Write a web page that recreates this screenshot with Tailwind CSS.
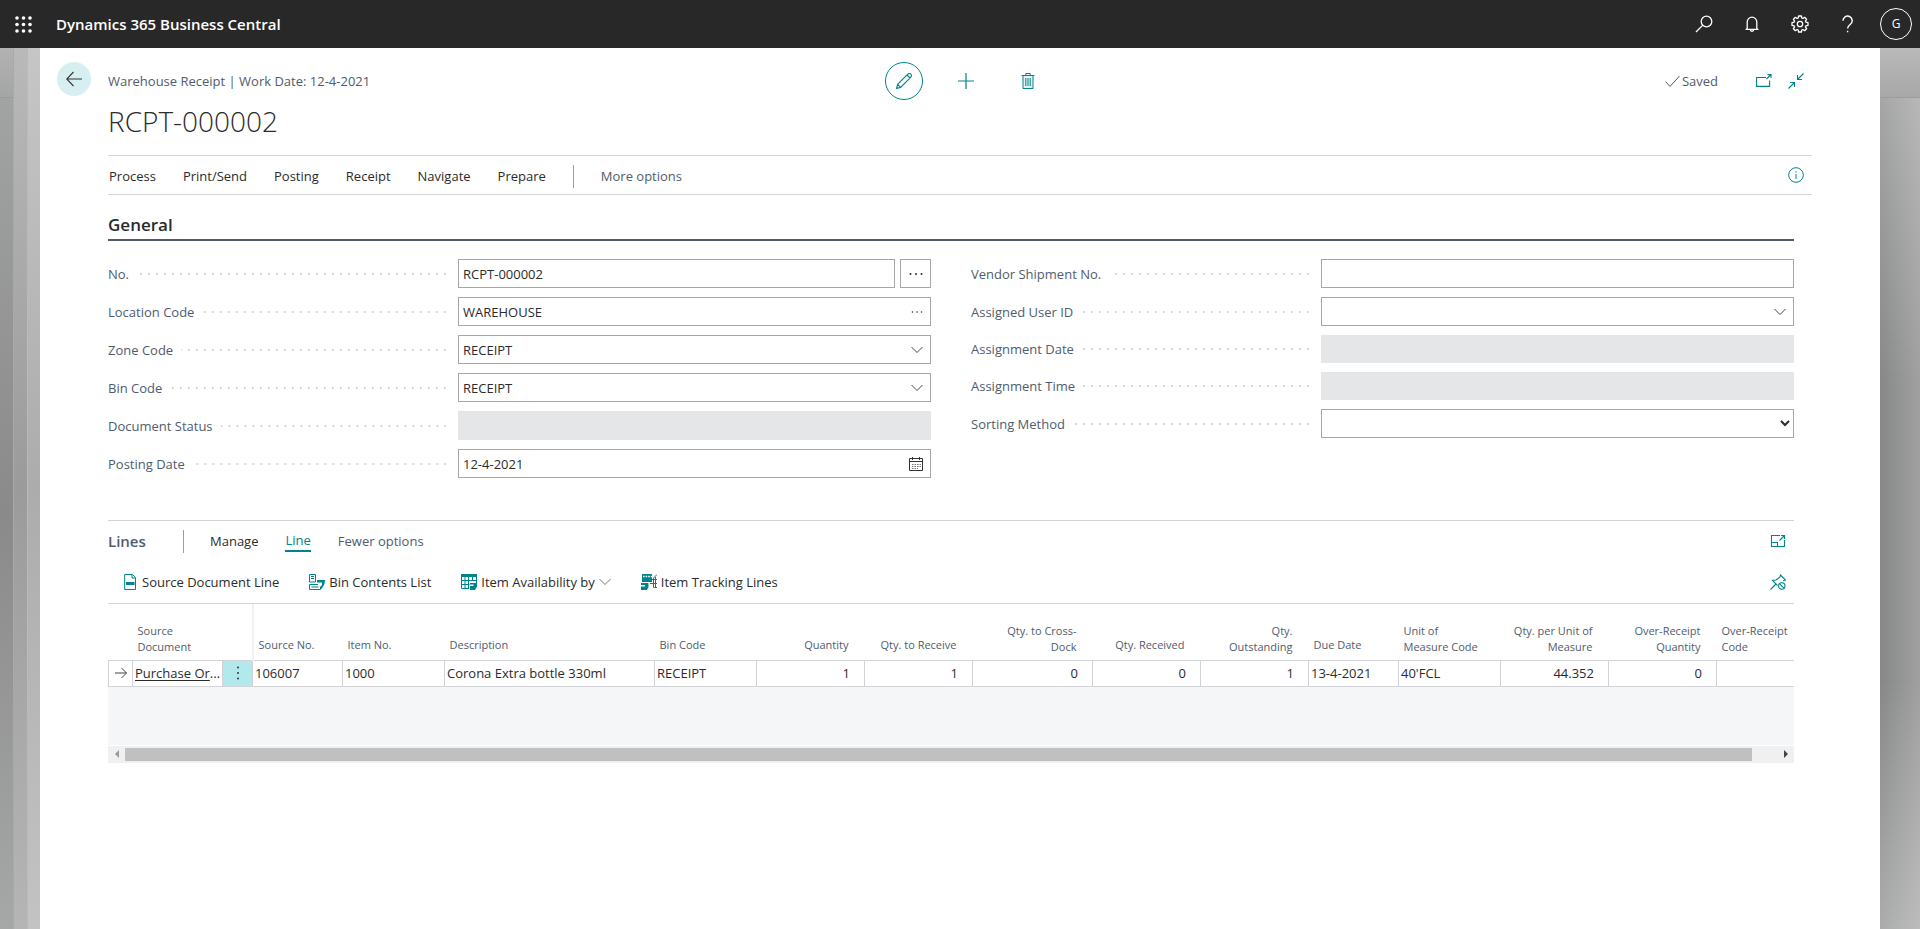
<!DOCTYPE html>
<html lang="en">
<head>
  <meta charset="UTF-8">
  <meta name="viewport" content="width=device-width, initial-scale=1.0">
  <title>Warehouse Receipt - Dynamics 365 Business Central</title>
  <script src="https://cdn.jsdelivr.net/npm/@tailwindcss/browser@4"></script>
</head>
<body class="flex flex-col min-h-screen bg-[#a8a8a8] font-['Open_Sans','Noto_Sans',sans-serif] text-[13px] leading-5 text-[#2b2b2b]">

  <!-- Top bar -->
  <header class="h-12 shrink-0 bg-[#282828] text-white flex items-center justify-between pl-[15px] pr-2">
    <div class="flex items-center gap-6">
      <button type="button" aria-label="App launcher">
        <svg class="w-[17px] h-[17px]" viewBox="0 0 17 17" fill="currentColor">
          <circle cx="2" cy="2" r="1.8"/><circle cx="8.5" cy="2" r="1.8"/><circle cx="15" cy="2" r="1.8"/>
          <circle cx="2" cy="8.5" r="1.8"/><circle cx="8.5" cy="8.5" r="1.8"/><circle cx="15" cy="8.5" r="1.8"/>
          <circle cx="2" cy="15" r="1.8"/><circle cx="8.5" cy="15" r="1.8"/><circle cx="15" cy="15" r="1.8"/>
        </svg>
      </button>
      <a href="#" class="text-[15px] font-semibold">Dynamics 365 Business Central</a>
    </div>
    <div class="flex items-center">
      <button type="button" aria-label="Search" class="w-12 h-12 flex items-center justify-center">
        <svg class="w-[18px] h-[18px]" viewBox="0 0 18 18" fill="none" stroke="currentColor" stroke-width="1.3"><circle cx="11.5" cy="6.5" r="5.3"/><path d="M7.6 10.4 1 17"/></svg>
      </button>
      <button type="button" aria-label="Notifications" class="w-12 h-12 flex items-center justify-center">
        <svg class="w-4 h-4" viewBox="0 0 16 16" fill="none" stroke="currentColor" stroke-width="1.3"><path d="M1.5 13.3h13M3.2 13.3V6a4.8 4.8 0 0 1 9.6 0v7.3M6.3 13.6a1.7 1.7 0 0 0 3.4 0"/></svg>
      </button>
      <button type="button" aria-label="Settings" class="w-12 h-12 flex items-center justify-center">
        <svg class="w-[18px] h-[18px]" viewBox="0 0 18 18" fill="none" stroke="currentColor" stroke-width="1.3" stroke-linejoin="round"><path d="M7.6 1h2.8l.4 2 1.1.5 1.7-1.2 2 2-1.2 1.8.5 1.1 2.1.4v2.8l-2.1.4-.5 1.1 1.2 1.8-2 2-1.7-1.2-1.1.5-.4 2H7.6l-.4-2-1.1-.5-1.7 1.2-2-2 1.2-1.8-.5-1.1L1 10.4V7.6l2.1-.4.5-1.1-1.2-1.8 2-2 1.7 1.2L7.2 3z"/><circle cx="9" cy="9" r="2.7"/></svg>
      </button>
      <button type="button" aria-label="Help" class="w-12 h-12 flex items-center justify-center">
        <svg class="w-[18px] h-[18px]" viewBox="0 0 18 18" fill="none" stroke="currentColor" stroke-width="1.4"><path d="M4 5.8a4.6 4.6 0 1 1 7.4 3.5C9.4 10.8 8.6 11.5 8.6 13.6"/><path d="M8.6 15.8v1.5"/></svg>
      </button>
      <button type="button" aria-label="Account" class="ml-2 w-8 h-8 rounded-full border border-white flex items-center justify-center text-xs">G</button>
    </div>
  </header>

  <div class="flex flex-1">
    <!-- Stacked pages to the left -->
    <div class="flex w-10 shrink-0">
      <div class="w-[13px] flex flex-col">
        <div class="h-[50px] border-b border-[#9a9b9b] bg-linear-to-b from-[#b2b2b2] to-[#a4a5a5]"></div>
        <div class="flex-1 bg-linear-to-b from-[#a2a3a3] via-[#8a8a8a] to-[#a6a7a7]"></div>
      </div>
      <div class="w-[14px] border-l border-[#a8a9a9] bg-linear-to-b from-[#b9b9b9] via-[#9b9b9b] to-[#b5b5b5]"></div>
      <div class="w-[13px] border-l border-[#bababa] bg-linear-to-b from-[#c6c6c6] via-[#acacac] to-[#c3c3c3]"></div>
    </div>

    <main class="flex-1 min-w-0 bg-white pr-[68px]">
      <div class="flex">
        <div class="w-[68px] shrink-0 pt-[14px] pl-[17px]">
          <button type="button" aria-label="Back" class="w-[34px] h-[34px] rounded-full bg-[#d8eff1] flex items-center justify-center">
            <svg class="w-4 h-4" viewBox="0 0 16 16" fill="none" stroke="#333" stroke-width="1.1"><path d="M16 8H.8M7.5 1 .7 8l6.8 7"/></svg>
          </button>
        </div>

        <div class="flex-1 min-w-0">
          <!-- Caption and page commands -->
          <div class="grid grid-cols-[1fr_auto_1fr] items-center pt-[14px]">
            <p class="text-[#505c6d]">Warehouse Receipt | Work Date: 12-4-2021</p>
            <div class="flex items-center gap-6 pl-3 text-[#00838a]">
              <button type="button" aria-label="Edit" class="w-[38px] h-[38px] rounded-full border border-[#00838a] flex items-center justify-center">
                <svg class="w-4 h-4" viewBox="0 0 16 16" fill="none" stroke="currentColor" stroke-width="1.1"><path d="M.6 15.4 1.6 11.4 11.8 1.2a1.9 1.9 0 0 1 3 3L4.6 14.4zM1.6 11.4l3 3M11 2l3 3"/></svg>
              </button>
              <button type="button" aria-label="New" class="w-[38px] h-[38px] flex items-center justify-center">
                <svg class="w-4 h-4" viewBox="0 0 16 16" fill="none" stroke="currentColor" stroke-width="1.2"><path d="M8 0v16M0 8h16"/></svg>
              </button>
              <button type="button" aria-label="Delete" class="w-[38px] h-[38px] flex items-center justify-center">
                <svg class="w-4 h-4" viewBox="0 0 16 16" fill="none" stroke="currentColor"><path fill="#e3f2f3" d="M3 2.5v13h10v-13"/><path d="M1.5 2.5h13M5.8 2.5v-2h4.4v2M5.8 5v8M8 5v8M10.2 5v8"/></svg>
              </button>
            </div>
            <div class="flex items-center justify-end text-[#00838a]">
              <span class="flex items-center gap-0.5 mr-[38px] text-[#505c6d]">
                <svg class="w-[15px] h-[15px]" viewBox="0 0 15 15" fill="none" stroke="currentColor"><path d="m.5 7.5 4.5 5L14.5 2"/></svg>
                Saved
              </span>
              <button type="button" aria-label="Open in new window" class="mr-4">
                <svg class="w-4 h-4" viewBox="0 0 16 16" fill="none" stroke="currentColor" stroke-width="1.1"><path d="M10 4.5H.6v8.9h13V7.5M10.5 6l4-4M11.5 1.6H15V5"/></svg>
              </button>
              <button type="button" aria-label="Collapse page" class="mr-2">
                <svg class="w-4 h-4" viewBox="0 0 16 16" fill="none" stroke="currentColor" stroke-width="1.1"><path d="m.5 15.5 6-6M2 9.5h4.5V14M15.5.5l-6 6M9.5 2v4.5H14"/></svg>
              </button>
            </div>
          </div>
          <h1 class="text-[28px] leading-9 font-light pt-[3px]">RCPT-000002</h1>
        </div>
      </div>

      <div class="pl-[68px]">
        <!-- Action bar -->
        <nav class="mt-4 h-10 border-y border-[#d1d3d8] flex items-center pl-px">
          <div class="flex items-center gap-[27px] pt-0.5">
            <button type="button">Process</button>
            <button type="button">Print/Send</button>
            <button type="button">Posting</button>
            <button type="button">Receipt</button>
            <button type="button">Navigate</button>
            <button type="button">Prepare</button>
            <span class="w-px h-[23px] bg-[#9a9fa8]"></span>
            <button type="button" class="text-[#505c6d]">More options</button>
          </div>
          <button type="button" aria-label="Details" class="ml-auto mr-2 text-[#00838a]">
            <svg class="w-4 h-4" viewBox="0 0 16 16" fill="none" stroke="currentColor"><circle cx="8" cy="8" r="7.3"/><path d="M8 7v5M8 4.2v1.3"/></svg>
          </button>
        </nav>

        <div class="mr-[18px]">
          <!-- General -->
          <section class="pt-4">
            <h2 class="text-[17px] leading-7 font-semibold border-b-2 border-[#505c6d]">General</h2>
            <form class="grid grid-cols-2 gap-x-10 pt-[18px]">
              <div class="flex flex-col gap-[9px]">
                <div class="flex items-center">
                  <label for="no" class="pr-2 text-[#505c6d]">No.</label>
                  <span class="flex-1 h-0.5 mr-3 bg-[linear-gradient(to_left,#d4d6da_2px,transparent_2px)] bg-[length:8px_2px] bg-right bg-repeat-x"></span>
                  <div class="w-[473px] flex gap-[5px]">
                    <input id="no" type="text" value="RCPT-000002" class="flex-1 min-w-0 h-[29px] border border-[#a6a6a6] px-1">
                    <button type="button" aria-label="Assist edit No." class="w-[31px] h-[29px] border border-[#a6a6a6] flex items-center justify-center">
                      <svg class="w-4 h-4" viewBox="0 0 16 16" fill="#333"><circle cx="2.5" cy="8" r="1"/><circle cx="8" cy="8" r="1"/><circle cx="13.5" cy="8" r="1"/></svg>
                    </button>
                  </div>
                </div>
                <div class="flex items-center">
                  <label for="location" class="pr-2 text-[#505c6d]">Location Code</label>
                  <span class="flex-1 h-0.5 mr-3 bg-[linear-gradient(to_left,#d4d6da_2px,transparent_2px)] bg-[length:8px_2px] bg-right bg-repeat-x"></span>
                  <div class="w-[473px] h-[29px] border border-[#a6a6a6] flex items-center">
                    <input id="location" type="text" value="WAREHOUSE" class="flex-1 min-w-0 px-1 outline-none">
                    <button type="button" aria-label="Look up location" class="mr-[7px]">
                      <svg class="w-3 h-3" viewBox="0 0 12 12" fill="#333"><circle cx="1.5" cy="6" r=".8"/><circle cx="6" cy="6" r=".8"/><circle cx="10.5" cy="6" r=".8"/></svg>
                    </button>
                  </div>
                </div>
                <div class="flex items-center">
                  <label for="zone" class="pr-2 text-[#505c6d]">Zone Code</label>
                  <span class="flex-1 h-0.5 mr-3 bg-[linear-gradient(to_left,#d4d6da_2px,transparent_2px)] bg-[length:8px_2px] bg-right bg-repeat-x"></span>
                  <div class="w-[473px] h-[29px] border border-[#a6a6a6] flex items-center">
                    <input id="zone" type="text" value="RECEIPT" class="flex-1 min-w-0 px-1 outline-none">
                    <button type="button" aria-label="Look up zone" class="mr-[7px]">
                      <svg class="w-3 h-3" viewBox="0 0 12 12" fill="none" stroke="#444"><path d="m.5 3 5.5 5.5L11.5 3"/></svg>
                    </button>
                  </div>
                </div>
                <div class="flex items-center">
                  <label for="bin" class="pr-2 text-[#505c6d]">Bin Code</label>
                  <span class="flex-1 h-0.5 mr-3 bg-[linear-gradient(to_left,#d4d6da_2px,transparent_2px)] bg-[length:8px_2px] bg-right bg-repeat-x"></span>
                  <div class="w-[473px] h-[29px] border border-[#a6a6a6] flex items-center">
                    <input id="bin" type="text" value="RECEIPT" class="flex-1 min-w-0 px-1 outline-none">
                    <button type="button" aria-label="Look up bin" class="mr-[7px]">
                      <svg class="w-3 h-3" viewBox="0 0 12 12" fill="none" stroke="#444"><path d="m.5 3 5.5 5.5L11.5 3"/></svg>
                    </button>
                  </div>
                </div>
                <div class="flex items-center">
                  <label for="status" class="pr-2 text-[#505c6d]">Document Status</label>
                  <span class="flex-1 h-0.5 mr-3 bg-[linear-gradient(to_left,#d4d6da_2px,transparent_2px)] bg-[length:8px_2px] bg-right bg-repeat-x"></span>
                  <input id="status" type="text" disabled class="w-[473px] h-[29px] bg-[#e5e6e8] px-1">
                </div>
                <div class="flex items-center">
                  <label for="posting" class="pr-2 text-[#505c6d]">Posting Date</label>
                  <span class="flex-1 h-0.5 mr-3 bg-[linear-gradient(to_left,#d4d6da_2px,transparent_2px)] bg-[length:8px_2px] bg-right bg-repeat-x"></span>
                  <div class="w-[473px] h-[29px] border border-[#a6a6a6] flex items-center">
                    <input id="posting" type="text" value="12-4-2021" class="flex-1 min-w-0 px-1 outline-none">
                    <button type="button" aria-label="Pick a date" class="mr-1.5">
                      <svg class="w-4 h-4" viewBox="0 0 16 16" fill="none" stroke="#333"><path d="M1.5 2.5h13v12h-13zM1.5 5.5h13M4.5 1v3M11.5 1v3"/><path stroke="#777" stroke-dasharray="1.5 1" d="M4 8.5h9M4 10.5h9M4 12.5h6"/></svg>
                    </button>
                  </div>
                </div>
              </div>

              <div class="flex flex-col gap-[9px]">
                <div class="flex items-center">
                  <label for="shipment" class="pr-2 text-[#505c6d]">Vendor Shipment No.</label>
                  <span class="flex-1 h-0.5 mr-3 bg-[linear-gradient(to_left,#d4d6da_2px,transparent_2px)] bg-[length:8px_2px] bg-right bg-repeat-x"></span>
                  <input id="shipment" type="text" class="w-[473px] h-[29px] border border-[#a6a6a6] px-1">
                </div>
                <div class="flex items-center">
                  <label for="user" class="pr-2 text-[#505c6d]">Assigned User ID</label>
                  <span class="flex-1 h-0.5 mr-3 bg-[linear-gradient(to_left,#d4d6da_2px,transparent_2px)] bg-[length:8px_2px] bg-right bg-repeat-x"></span>
                  <div class="w-[473px] h-[29px] border border-[#a6a6a6] flex items-center">
                    <input id="user" type="text" class="flex-1 min-w-0 px-1 outline-none">
                    <button type="button" aria-label="Look up user" class="mr-[7px]">
                      <svg class="w-3 h-3" viewBox="0 0 12 12" fill="none" stroke="#444"><path d="m.5 3 5.5 5.5L11.5 3"/></svg>
                    </button>
                  </div>
                </div>
                <div class="flex items-center">
                  <label for="adate" class="pr-2 text-[#505c6d]">Assignment Date</label>
                  <span class="flex-1 h-0.5 mr-3 bg-[linear-gradient(to_left,#d4d6da_2px,transparent_2px)] bg-[length:8px_2px] bg-right bg-repeat-x"></span>
                  <input id="adate" type="text" disabled class="w-[473px] h-7 bg-[#e5e6e8] px-1">
                </div>
                <div class="flex items-center">
                  <label for="atime" class="pr-2 text-[#505c6d]">Assignment Time</label>
                  <span class="flex-1 h-0.5 mr-3 bg-[linear-gradient(to_left,#d4d6da_2px,transparent_2px)] bg-[length:8px_2px] bg-right bg-repeat-x"></span>
                  <input id="atime" type="text" disabled class="w-[473px] h-7 bg-[#e5e6e8] px-1">
                </div>
                <div class="flex items-center">
                  <label for="sorting" class="pr-2 text-[#505c6d]">Sorting Method</label>
                  <span class="flex-1 h-0.5 mr-3 bg-[linear-gradient(to_left,#d4d6da_2px,transparent_2px)] bg-[length:8px_2px] bg-right bg-repeat-x"></span>
                  <select id="sorting" class="w-[473px] h-[29px] border border-[#a6a6a6] bg-white"><option></option></select>
                </div>
              </div>
            </form>
          </section>

          <!-- Lines -->
          <section class="mt-[42px] border-t border-[#d1d3d8]">
            <div class="h-10 flex items-center">
              <h2 class="w-[75px] text-[15px] font-semibold text-[#505c6d]">Lines</h2>
              <span class="w-px h-[23px] bg-[#9a9fa8]"></span>
              <div class="flex items-center gap-[27px] pl-[26px]">
                <button type="button">Manage</button>
                <button type="button" class="text-[#00838a] border-b-2 border-[#00838a]">Line</button>
                <button type="button" class="text-[#505c6d]">Fewer options</button>
              </div>
              <button type="button" aria-label="Focus mode" class="ml-auto mr-2 text-[#00838a]">
                <svg class="w-4 h-4" viewBox="0 0 16 16" fill="none" stroke="currentColor" stroke-width="1.1"><path d="M10 2.5H1.5v11h13V7M1.5 9.5h6v4M9.5 7.5l5-5M11 2.5h3.5V6"/></svg>
              </button>
            </div>

            <div class="h-[42px] flex items-center gap-[30px] pl-4">
              <button type="button" class="flex items-center gap-0.5">
                <svg class="w-4 h-4" viewBox="0 0 16 16" fill="none" stroke="#00838a"><path d="M.7.5h7.8l3 3v12H.7zM8 .5V4h3.5"/><path stroke-width="3" d="M2 9.5h8.5"/></svg>
                Source Document Line
              </button>
              <button type="button" class="flex items-center gap-1">
                <svg class="w-4 h-4" viewBox="0 0 16 16" fill="none" stroke="#00838a"><path d="M.5.5h6V8h-6zM2 2.5h3M2 4.5h3M9 10.5H.5v5h11v-3M2.5 13h7M9 6.5h6.5"/><path fill="#00838a" stroke="none" d="M8 6h8l-.5 4-3 5H12v-3.5h1V8.5H8z"/></svg>
                Bin Contents List
              </button>
              <button type="button" class="flex items-center gap-1">
                <svg class="w-4 h-4" viewBox="0 0 16 16" fill="none" stroke="#00838a"><path fill="#00838a" stroke="none" d="M0 0h16v3H0z"/><path d="M.5 3v11.5H8M4 3v12M7.5 3v12M11.5 3v4M15.5 3v6M.5 6.5h15M.5 10.5h8"/><path fill="#00838a" stroke="none" d="M9 9h7v3.5L14 16H9v-4h3.500v-1.500H9z"/></svg>
                Item Availability by
                <svg class="w-3 h-3" viewBox="0 0 12 12" fill="none" stroke="#777"><path d="m.5 3 5.5 5.5L11.5 3"/></svg>
              </button>
              <button type="button" class="flex items-center gap-1">
                <svg class="w-4 h-4" viewBox="0 0 16 16" fill="none" stroke="#00838a"><path fill="#00838a" stroke="none" d="M1 0h10v8H1z"/><path stroke="#fff" stroke-width="1.6" stroke-dasharray="1.6 1" d="M2 2.5h9"/><path d="M16 .5 12.5 4v9.500H16M11 5.500h5M14.500 3v10.500M9 9.500h7"/><path fill="#00838a" stroke="none" d="M0 9h7.500v4L6 16H0v-3.500h4V11H0z"/></svg>
                Item Tracking Lines
              </button>
              <button type="button" aria-label="Unpin" class="ml-auto mr-2 text-[#00838a]">
                <svg class="w-4 h-4" viewBox="0 0 16 16" fill="none" stroke="currentColor" stroke-width="1.1"><path d="m.5 15.5 5.5-5.5M7.5 11.5l-5-5 3.500-.5L10 3l.5-2 5 5-2.500.8"/><circle cx="11.8" cy="12" r="3.2"/><path d="m9.6 9.8 4.4 4.4"/></svg>
              </button>
            </div>

            <div class="overflow-hidden border-t border-[#d1d3d8]">
              <table class="table-fixed w-[1711px] border-collapse">
                <colgroup>
                  <col class="w-6"><col class="w-[90px]"><col class="w-[30px]"><col class="w-[90px]"><col class="w-[102px]"><col class="w-[210px]"><col class="w-[102px]"><col class="w-[108px]"><col class="w-[108px]"><col class="w-[120px]"><col class="w-[108px]"><col class="w-[108px]"><col class="w-[90px]"><col class="w-[102px]"><col class="w-[108px]"><col class="w-[108px]"><col>
                </colgroup>
                <thead class="text-[11px] leading-5 text-[#505c6d] text-left">
                  <tr class="h-14">
                    <th></th>
                    <th class="font-normal align-bottom leading-4 pl-[5px] pb-[5px]">Source Document</th>
                    <th class="border-r-2 border-[#f0f1f3]"></th>
                    <th class="font-normal align-bottom pl-[5px] pb-[5px]">Source No.</th>
                    <th class="font-normal align-bottom pl-[5px] pb-[5px]">Item No.</th>
                    <th class="font-normal align-bottom pl-[5px] pb-[5px]">Description</th>
                    <th class="font-normal align-bottom pl-[5px] pb-[5px]">Bin Code</th>
                    <th class="font-normal align-bottom text-right pr-4 pb-[5px]">Quantity</th>
                    <th class="font-normal align-bottom text-right pr-4 pb-[5px]">Qty. to Receive</th>
                    <th class="font-normal align-bottom leading-4 text-right pr-4 pb-[5px]">Qty. to Cross-<br>Dock</th>
                    <th class="font-normal align-bottom text-right pr-4 pb-[5px]">Qty. Received</th>
                    <th class="font-normal align-bottom leading-4 text-right pr-4 pb-[5px]">Qty.<br>Outstanding</th>
                    <th class="font-normal align-bottom pl-[5px] pb-[5px]">Due Date</th>
                    <th class="font-normal align-bottom leading-4 pl-[5px] pb-[5px]">Unit of<br>Measure Code</th>
                    <th class="font-normal align-bottom leading-4 text-right pr-4 pb-[5px]">Qty. per Unit of<br>Measure</th>
                    <th class="font-normal align-bottom leading-4 text-right pr-4 pb-[5px]">Over-Receipt Quantity</th>
                    <th class="font-normal align-bottom leading-4 pl-[5px] pb-[5px]">Over-Receipt<br>Code</th>
                  </tr>
                </thead>
                <tbody>
                  <tr class="h-[26px] border-y border-[#d1d3d8]">
                    <td class="border border-[#d1d3d8]">
                      <svg class="w-3 h-3 mx-auto" viewBox="0 0 12 12" fill="none" stroke="#444"><path d="M0 6h11.500M6.500 1l5 5-5 5"/></svg>
                    </td>
                    <td class="border border-[#d1d3d8] pl-0.5 whitespace-nowrap"><a href="#" title="Purchase Order"><span class="underline underline-offset-2">Purchase Or</span>...</a></td>
                    <td class="border border-[#d1d3d8] bg-[#b2e9ed]">
                      <button type="button" aria-label="Row menu" class="flex w-full justify-center">
                        <svg class="w-4 h-4" viewBox="0 0 16 16" fill="#333"><circle cx="8" cy="2.5" r="1"/><circle cx="8" cy="8" r="1"/><circle cx="8" cy="13.5" r="1"/></svg>
                      </button>
                    </td>
                    <td class="border border-[#d1d3d8] px-0.5">106007</td>
                    <td class="border border-[#d1d3d8] px-0.5">1000</td>
                    <td class="border border-[#d1d3d8] px-0.5">Corona Extra bottle 330ml</td>
                    <td class="border border-[#d1d3d8] px-0.5">RECEIPT</td>
                    <td class="border border-[#d1d3d8] pr-[14px] text-right">1</td>
                    <td class="border border-[#d1d3d8] pr-[14px] text-right">1</td>
                    <td class="border border-[#d1d3d8] pr-[14px] text-right">0</td>
                    <td class="border border-[#d1d3d8] pr-[14px] text-right">0</td>
                    <td class="border border-[#d1d3d8] pr-[14px] text-right">1</td>
                    <td class="border border-[#d1d3d8] px-0.5">13-4-2021</td>
                    <td class="border border-[#d1d3d8] px-0.5">40'FCL</td>
                    <td class="border border-[#d1d3d8] pr-[14px] text-right">44.352</td>
                    <td class="border border-[#d1d3d8] pr-[14px] text-right">0</td>
                    <td class="border border-[#d1d3d8] px-0.5"></td>
                  </tr>
                </tbody>
              </table>
              <div class="h-[58px] bg-[#f5f6f8]"></div>
              <!-- Horizontal scroll bar -->
              <div class="mt-px h-[17px] bg-[#f0f0f0] flex items-center">
                <button type="button" aria-label="Scroll left" class="w-[17px] flex justify-center"><svg class="w-2 h-2" viewBox="0 0 8 8" fill="#9a9a9a"><path d="M6 0v8L2 4z"/></svg></button>
                <div class="flex-1 h-[13px]"><div class="h-full bg-[#c0c0c0]" style="width: 98.5%"></div></div>
                <button type="button" aria-label="Scroll right" class="w-[17px] flex justify-center"><svg class="w-2 h-2" viewBox="0 0 8 8" fill="#444"><path d="M2 0v8l4-4z"/></svg></button>
              </div>
            </div>
          </section>
        </div>
      </div>
    </main>

    <!-- Backdrop to the right -->
    <div class="flex flex-col w-10 shrink-0">
      <div class="h-[50px] border-b border-[#9d9d9d] bg-linear-to-b from-[#b9b9b9] to-[#a8a8a8]"></div>
      <div class="flex-1 bg-[linear-gradient(to_bottom,rgb(255_255_255/0.25),transparent_35%,transparent_70%,rgb(255_255_255/0.3)),linear-gradient(to_right,#868887,#a0a0a0)]"></div>
    </div>
  </div>
</body>
</html>
